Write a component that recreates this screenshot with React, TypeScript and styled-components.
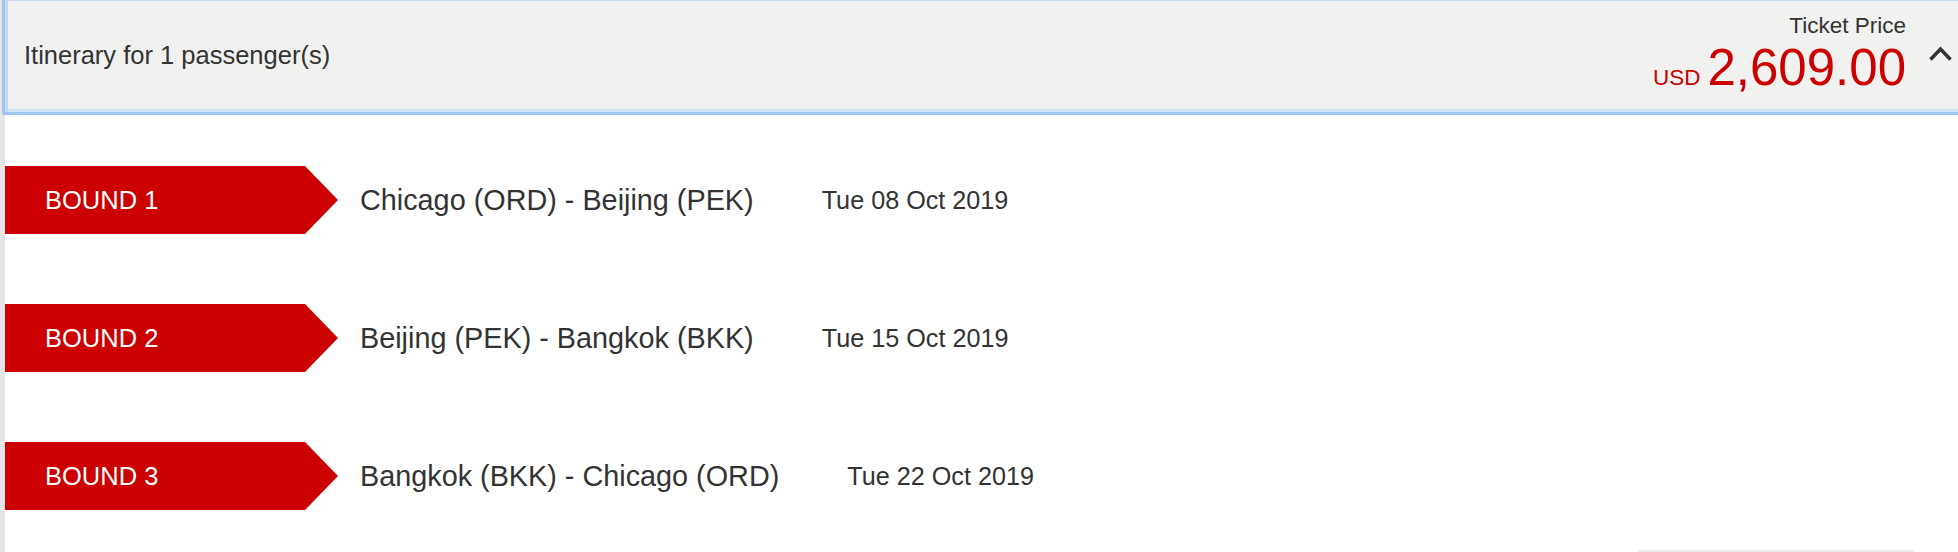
import React from "react";
import styled, { createGlobalStyle } from "styled-components";

const GlobalStyle = createGlobalStyle`
  html, body {
    margin: 0;
    padding: 0;
    background: #ffffff;
    font-family: "Liberation Sans", Arial, Helvetica, sans-serif;
    color: #333333;
    overflow: hidden;
  }
`;

const Page = styled.div`
  display: flex;
  flex-direction: column;
  min-height: 552px;
  border-left: 5px solid #e6e6e6;
`;

const Header = styled.div`
  position: relative;
  z-index: 1;
  height: 112px;
  display: flex;
  align-items: center;
  justify-content: space-between;
  background: #f1f1f0;
  border-top: 1px solid #c3d8f3;
  box-sizing: border-box;
  box-shadow: 0 0 0 3px #a3c6f1, inset 3px 0 0 #c2d8f4, inset 0 -3px 0 #d3e2f4;
`;

const Title = styled.div`
  padding-left: 19px;
  font-size: 25.5px;
  margin-top: -3px;
`;

const PriceArea = styled.div`
  display: flex;
  align-self: flex-start;
  gap: 22px;
  padding-right: 5px;
`;

const PriceBlock = styled.div`
  display: flex;
  flex-direction: column;
  align-items: flex-end;
  padding-top: 12px;
`;

const PriceLabel = styled.div`
  font-size: 22.5px;
  line-height: 26px;
`;

const PriceLine = styled.div`
  margin-top: 3px;
  line-height: 52px;
  color: #cc0000;
  white-space: nowrap;
`;

const Currency = styled.span`
  font-size: 22.5px;
  margin-right: 7px;
`;

const Amount = styled.span`
  font-size: 51px;
`;

const Toggle = styled.svg`
  margin-top: 44px;
  width: 25px;
  height: 17px;
`;

const Bounds = styled.div`
  display: flex;
  flex-direction: column;
  gap: 70px;
  padding-top: 54px;
`;

const BoundRow = styled.div`
  display: flex;
  align-items: center;
  height: 68px;
`;

const Ribbon = styled.div`
  flex: none;
  width: 333px;
  height: 68px;
  display: flex;
  align-items: center;
  box-sizing: border-box;
  padding-left: 40px;
  background: #cc0000;
  color: #ffffff;
  font-size: 25.5px;
  clip-path: polygon(0 0, calc(100% - 33px) 0, 100% 50%, calc(100% - 33px) 100%, 0 100%);
`;

const Route = styled.div`
  margin-left: 22px;
  font-size: 28.8px;
  color: #333333;
`;

const TravelDate = styled.div`
  margin-left: 68px;
  font-size: 25.2px;
  color: #333333;
`;

const Footer = styled.div`
  display: flex;
  justify-content: flex-end;
  padding: 40px 42px 0 0;
`;

const ContinueBox = styled.div`
  width: 280px;
  height: 48px;
  border-radius: 5px;
  background: #ececec;
`;

const bounds = [
  { label: "BOUND 1", route: "Chicago (ORD) - Beijing (PEK)", date: "Tue 08 Oct 2019" },
  { label: "BOUND 2", route: "Beijing (PEK) - Bangkok (BKK)", date: "Tue 15 Oct 2019" },
  { label: "BOUND 3", route: "Bangkok (BKK) - Chicago (ORD)", date: "Tue 22 Oct 2019" },
];

const App = () => {
  return (
    <>
      <GlobalStyle />
      <Page>
        <Header>
          <Title>Itinerary for 1 passenger(s)</Title>
          <PriceArea>
            <PriceBlock>
              <PriceLabel>Ticket Price</PriceLabel>
              <PriceLine>
                <Currency>USD</Currency>
                <Amount>2,609.00</Amount>
              </PriceLine>
            </PriceBlock>
            <Toggle viewBox="0 0 25 17">
              <polyline
                points="2.5,14.5 12.5,4 22.5,14.5"
                fill="none"
                stroke="#333333"
                strokeWidth="3.6"
              />
            </Toggle>
          </PriceArea>
        </Header>

        <Bounds>
          {bounds.map((b) => (
            <BoundRow key={b.label}>
              <Ribbon>{b.label}</Ribbon>
              <Route>{b.route}</Route>
              <TravelDate>{b.date}</TravelDate>
            </BoundRow>
          ))}
        </Bounds>

        <Footer>
          <ContinueBox />
        </Footer>
      </Page>
    </>
  );
};

export default App;
